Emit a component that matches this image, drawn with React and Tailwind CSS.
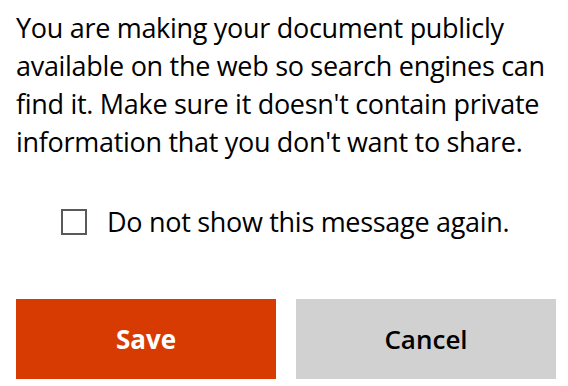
import React, { useState } from "react";

function App() {
  const [checked, setChecked] = useState(false);

  return (
    <div
      className="w-[568px] h-[386px] bg-white text-black overflow-hidden"
      style={{ fontFamily: '"Open Sans", "Noto Sans", sans-serif' }}
    >
      <div className="pl-4 pr-3 pt-[9px]">
        <p className="text-[27px] leading-[38px] tracking-[-0.3px] whitespace-nowrap">
          You are making your document publicly
          <br />
          available on the web so search engines can
          <br />
          find it. Make sure it doesn't contain private
          <br />
          information that you don't want to share.
        </p>

        {/* checkbox row */}
        <label className="flex items-center mt-[46px] ml-[45px] h-[30px] cursor-pointer">
          <input
            type="checkbox"
            checked={checked}
            onChange={(e) => setChecked(e.target.checked)}
            className="sr-only"
          />
          <span className="w-[26px] h-[26px] border-2 border-[#595959] bg-white flex items-center justify-center">
            {checked && (
              <svg width="18" height="18" viewBox="0 0 18 18">
                <path d="M3 9l4 4 8-8" fill="none" stroke="#333" strokeWidth="2" />
              </svg>
            )}
          </span>
          <span className="ml-[20px] text-[27px] tracking-[-0.3px]">
            Do not show this message again.
          </span>
        </label>

        {/* buttons */}
        <div className="flex gap-5 mt-[62px]">
          <button className="w-[260px] h-[80px] bg-[#d83b01] text-white text-[26px] font-bold">
            Save
          </button>
          <button className="w-[260px] h-[80px] bg-[#d1d1d1] text-black text-[26px] font-semibold">
            Cancel
          </button>
        </div>
      </div>
    </div>
  );
}

export default App;
